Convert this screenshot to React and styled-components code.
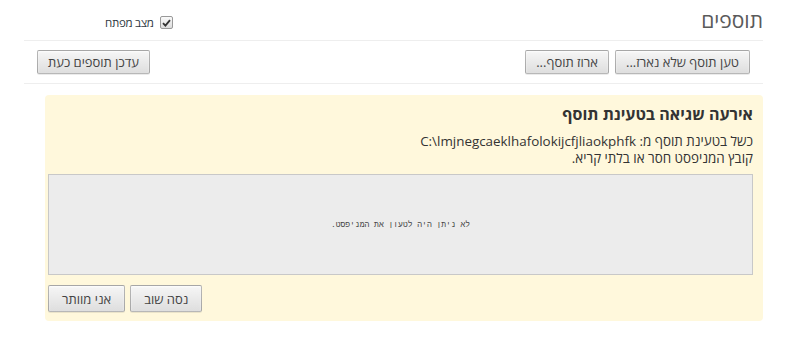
import React from 'react'
import styled, { createGlobalStyle } from 'styled-components'

const Global = createGlobalStyle`
    body {
        margin: 0;
        background: #fff;
        font-family: 'Open Sans', 'DejaVu Sans', sans-serif;
        font-size: 13px;
        color: #303942;
    }
`

const Page = styled.div`
    direction: rtl;
    padding: 0 45px 0 24px;
`

const Header = styled.div`
    display: flex;
    justify-content: space-between;
    align-items: flex-start;
    height: 40px;
    border-bottom: 1px solid #eee;
`

const Title = styled.h1`
    margin: 6px 0 0;
    font-size: 21px;
    font-weight: normal;
    color: #5a5a5a;
`

const DevMode = styled.label`
    display: flex;
    align-items: center;
    gap: 6px;
    margin: 15px 0 0 81px;
    font-size: 11.5px;
    letter-spacing: -0.3px;
    color: #303942;
`

const CheckBox = styled.span`
    display: flex;
    align-items: center;
    justify-content: center;
    width: 11px;
    height: 11px;
    border: 1px solid #999;
    border-radius: 2px;
    background: linear-gradient(#fafafa, #dcdcdc);
`

const Toolbar = styled.div`
    display: flex;
    justify-content: space-between;
    align-items: center;
    height: 42px;
    padding: 0 13px;
    border-bottom: 1px solid #eee;
`

const Group = styled.div`
    display: flex;
    gap: 6px;
`

const Button = styled.button`
    font-family: 'Open Sans', 'DejaVu Sans', sans-serif;
    font-size: 13px;
    color: #444;
    height: ${(p) => (p.$tall ? '27px' : '24px')};
    padding: 0 ${(p) => (p.$tall ? '13px' : '10px')};
    border: 1px solid rgba(0, 0, 0, 0.25);
    border-radius: 2px;
    background: linear-gradient(#f6f6f6, #dedede);
    box-shadow: 0 1px 0 rgba(0, 0, 0, 0.08), inset 0 1px 2px rgba(255, 255, 255, 0.75);
`

const Panel = styled.div`
    margin: 11px 0 0 21px;
    padding: 8px 10px 9px 3px;
    background: #fff8dc;
    border-radius: 4px;
`

const PanelTitle = styled.h2`
    margin: 0 0 8px;
    font-size: 16px;
    font-weight: bold;
    color: #333;
    line-height: 22px;
`

const Msg = styled.p`
    margin: 0;
    font-size: 13.4px;
    line-height: 17px;
    color: #333;
`

const Manifest = styled.div`
    display: flex;
    align-items: center;
    justify-content: center;
    height: 99px;
    margin-top: 7px;
    background: #ececec;
    border: 1px solid #c8c8c8;
    font-family: 'Liberation Mono', 'DejaVu Sans Mono', monospace;
    font-size: 8px;
    color: #444;
`

const Actions = styled.div`
    display: flex;
    justify-content: flex-end;
    gap: 5px;
    margin-top: 10px;
`

export default function App() {
    return (
        <Page>
            <Global />
            <Header>
                <Title>תוספים</Title>
                <DevMode>
                    <CheckBox>
                        <svg width="9" height="8" viewBox="0 0 9 8">
                            <path d="M1 4.2 L3.4 6.6 L8 1.2" fill="none" stroke="#333" strokeWidth="1.8" />
                        </svg>
                    </CheckBox>
                    מצב מפתח
                </DevMode>
            </Header>
            <Toolbar>
                <Group>
                    <Button>טען תוסף שלא נארז...</Button>
                    <Button>ארוז תוסף...</Button>
                </Group>
                <Button>עדכן תוספים כעת</Button>
            </Toolbar>
            <Panel>
                <PanelTitle>אירעה שגיאה בטעינת תוסף</PanelTitle>
                <Msg>כשל בטעינת תוסף מ: C:\lmjnegcaeklhafolokijcfjliaokphfk</Msg>
                <Msg>קובץ המניפסט חסר או בלתי קריא.</Msg>
                <Manifest>לא ניתן היה לטעון את המניפסט.</Manifest>
                <Actions>
                    <Button $tall>נסה שוב</Button>
                    <Button $tall>אני מוותר</Button>
                </Actions>
            </Panel>
        </Page>
    )
}
